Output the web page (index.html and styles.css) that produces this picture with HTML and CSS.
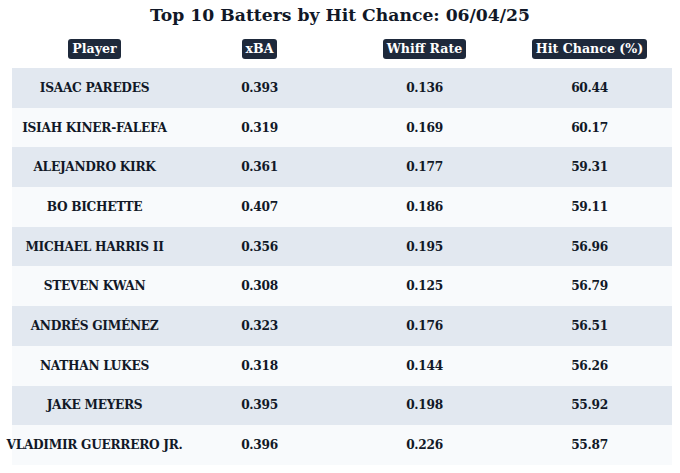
FILE: index.html
```html
<!DOCTYPE html>
<html>
<head>
<meta charset="utf-8">
<link rel="stylesheet" href="styles.css">
</head>
<body>
<div class="page">
  <h1 class="title">Top 10 Batters by Hit Chance: 06/04/25</h1>
  <div class="table">
    <div class="row head">
      <div class="cell"><span class="badge">Player</span></div>
      <div class="cell"><span class="badge">xBA</span></div>
      <div class="cell"><span class="badge">Whiff Rate</span></div>
      <div class="cell"><span class="badge">Hit Chance (%)</span></div>
    </div>
    <div class="row odd"><div class="cell">ISAAC PAREDES</div><div class="cell">0.393</div><div class="cell">0.136</div><div class="cell">60.44</div></div>
    <div class="row even"><div class="cell">ISIAH KINER-FALEFA</div><div class="cell">0.319</div><div class="cell">0.169</div><div class="cell">60.17</div></div>
    <div class="row odd"><div class="cell">ALEJANDRO KIRK</div><div class="cell">0.361</div><div class="cell">0.177</div><div class="cell">59.31</div></div>
    <div class="row even"><div class="cell">BO BICHETTE</div><div class="cell">0.407</div><div class="cell">0.186</div><div class="cell">59.11</div></div>
    <div class="row odd"><div class="cell">MICHAEL HARRIS II</div><div class="cell">0.356</div><div class="cell">0.195</div><div class="cell">56.96</div></div>
    <div class="row even"><div class="cell">STEVEN KWAN</div><div class="cell">0.308</div><div class="cell">0.125</div><div class="cell">56.79</div></div>
    <div class="row odd"><div class="cell">ANDRÉS GIMÉNEZ</div><div class="cell">0.323</div><div class="cell">0.176</div><div class="cell">56.51</div></div>
    <div class="row even"><div class="cell">NATHAN LUKES</div><div class="cell">0.318</div><div class="cell">0.144</div><div class="cell">56.26</div></div>
    <div class="row odd"><div class="cell">JAKE MEYERS</div><div class="cell">0.395</div><div class="cell">0.198</div><div class="cell">55.92</div></div>
    <div class="row even"><div class="cell">VLADIMIR GUERRERO JR.</div><div class="cell">0.396</div><div class="cell">0.226</div><div class="cell">55.87</div></div>
  </div>
</div>
</body>
</html>
```

FILE: styles.css
```css
html, body {
  margin: 0;
  padding: 0;
  background: #ffffff;
}
body {
  font-family: "DejaVu Serif", serif;
  color: #111827;
}
.page {
  width: 680px;
  height: 473px;
  padding: 0 8px 0 12px;
  box-sizing: border-box;
}
.title {
  margin: 0 -8px 0 -12px;
  height: 30px;
  line-height: 30px;
  font-size: 17.2px;
  font-weight: bold;
  text-align: center;
  color: #111827;
}
.table {
  display: flex;
  flex-direction: column;
  width: 660px;
}
.row {
  display: grid;
  grid-template-columns: repeat(4, minmax(0, 1fr));
  height: 39.7px;
  align-items: center;
}
.row.head {
  height: 38px;
}
.cell {
  display: flex;
  justify-content: center;
  font-weight: bold;
  font-size: 12.2px;
  letter-spacing: -0.3px;
  white-space: nowrap;
}
.odd { background: #e2e8f0; }
.even { background: #f8fafc; }
.badge {
  display: inline-block;
  background: #1e293b;
  color: #ffffff;
  font-size: 12.6px;
  letter-spacing: 0;
  line-height: 20px;
  padding: 0 4px;
  border-radius: 3px;
}
```
